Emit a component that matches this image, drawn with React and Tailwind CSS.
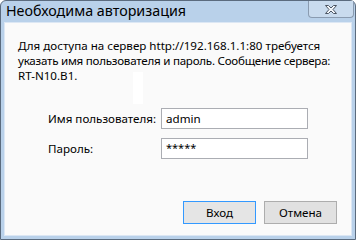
export default function App() {
  return (
    <div className="relative h-[240px] w-[356px] overflow-hidden bg-white">
      <div
        className="flex h-[240px] w-[356px] flex-col rounded-t-[6px] border border-[#5b6b7e] bg-[#b9d1ea] px-[3px] pb-[3px]"
        style={{ fontFamily: '"Noto Sans", "Liberation Sans", sans-serif' }}
      >
        <div className="flex h-[21px] shrink-0 items-start justify-between">
          <span className="pl-[2px] pt-[1px] text-[14.3px] leading-[18px] text-black">
            Необходима авторизация
          </span>
          <button
            type="button"
            className="-mr-[2px] flex h-[17px] w-[46px] items-center justify-center rounded-b-[4px] border border-t-0 border-[#8a9bb0] bg-[#c9dbee]"
            aria-label="Закрыть"
          >
            <svg width="14" height="11" viewBox="0 0 14 11">
              <path
                d="M1.5 1.5h3l2.5 2.5 2.5-2.5h3L9 5.5l3.5 4h-3L7 7l-2.5 2.5h-3L5 5.5z"
                fill="#f4f7fb"
                stroke="#4b5563"
                strokeWidth="1"
                strokeLinejoin="round"
              />
            </svg>
          </button>
        </div>
        <div className="relative flex flex-1 flex-col border border-[#dce7f4] bg-[#fafafa] px-[13px] pt-[15px] text-[11.6px] text-black">
          <div className="absolute left-[128px] top-[49px] h-[32px] w-[10px] bg-white" />
          <p className="relative whitespace-nowrap leading-[15px]">
            Для доступа на сервер http://192.168.1.1:80 требуется
            <br />
            <span className="tracking-[-0.25px]">указать имя пользователя и пароль. Сообщение сервера:</span>
            <br />
            RT-N10.B1.
          </p>
          <div className="relative mt-[25px] flex flex-col gap-[9px] pl-[30px]">
            <div className="flex items-center">
              <span className="w-[113px]">Имя пользователя:</span>
              <div className="flex h-[21px] w-[147px] items-center border border-[#abadb3] bg-white px-[4px]">
                admin
              </div>
            </div>
            <div className="flex items-center">
              <span className="w-[113px]">Пароль:</span>
              <div className="flex h-[21px] w-[147px] items-start border border-[#abadb3] bg-white px-[4px] pt-[1px] text-[11px]">
                *****
              </div>
            </div>
          </div>
          <div className="mt-auto flex justify-end gap-[8px] pb-[11px] pr-[1px]">
            <button
              type="button"
              className="h-[23px] w-[73px] border border-[#3399ff] bg-[#e5e5e5] text-[11.6px] text-black"
            >
              Вход
            </button>
            <button
              type="button"
              className="h-[23px] w-[73px] border border-[#adadad] bg-[#e1e1e1] text-[11.6px] text-black"
            >
              Отмена
            </button>
          </div>
        </div>
      </div>
    </div>
  );
}
